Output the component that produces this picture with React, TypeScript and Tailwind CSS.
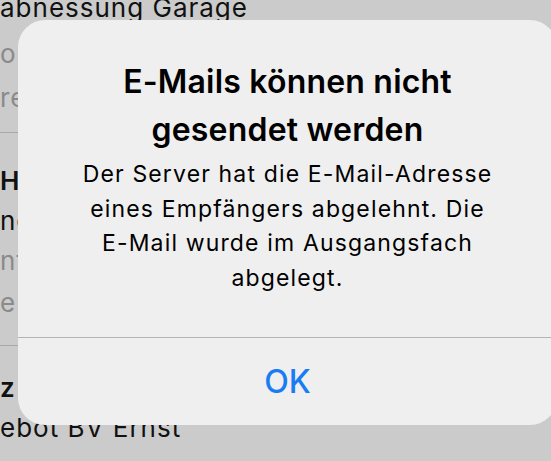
const font = "font-['Inter','Liberation_Sans',sans-serif]"

type RowProps = { text: string; tone: string; h: string }

const rows: RowProps[] = [
  { text: 'abnessung Garage', tone: 'text-[#111]', h: 'h-[46px]' },
  { text: 'o Vorgang erledigt', tone: 'text-[#8a8a8a]', h: 'h-[44px]' },
  { text: 're Angebote', tone: 'text-[#8a8a8a]', h: 'h-[40px]' },
]

const rows2: RowProps[] = [
  { text: 'Hausanschluss', tone: 'text-[#111] font-semibold', h: 'h-[40px]' },
  { text: 'nchen Kabel', tone: 'text-[#111]', h: 'h-[40px]' },
  { text: 'ntern Planung', tone: 'text-[#8a8a8a]', h: 'h-[42px]' },
  { text: 'e Angebot', tone: 'text-[#8a8a8a]', h: 'h-[40px]' },
]

const rows3: RowProps[] = [
  { text: 'z Anschluss', tone: 'text-[#111] font-semibold', h: 'h-[40px]' },
  { text: 'ebot BV Ernst', tone: 'text-[#111]', h: 'h-[40px]' },
]

const Row = ({ text, tone, h }: RowProps) => (
  <div className={`${h} text-[26px] tracking-[1px] leading-[40px] whitespace-nowrap ${tone}`}>
    {text}
  </div>
)

export default function App() {
  return (
    <div className={`relative w-[551px] h-[461px] overflow-hidden bg-[#cbcbcb] ${font}`}>
      {/* list behind the alert */}
      <div className="flex flex-col -mt-[12px]">
        {rows.map((r) => (
          <Row key={r.text} {...r} />
        ))}
        <div className="mt-[14px] h-px bg-[#a9a9a9]" />
        <div className="mt-[28px]">
          {rows2.map((r) => (
            <Row key={r.text} {...r} />
          ))}
        </div>
        <div className="mt-[22px] h-px bg-[#a9a9a9]" />
        <div className="mt-[22px]">
          {rows3.map((r) => (
            <Row key={r.text} {...r} />
          ))}
        </div>
      </div>

      {/* alert */}
      <div className="absolute left-[18px] top-[20px] w-[539px] h-[405px] rounded-[27px] bg-[#efefef] flex flex-col">
        <div className="h-[317px] flex flex-col items-center pt-[38px] text-center text-black">
          <h1 className="text-[32px] font-semibold leading-[48px] tracking-[0.2px]">
            E-Mails können nicht
            <br />
            gesendet werden
          </h1>
          <p className="text-[23px] leading-[34.5px] tracking-[1.15px] mt-[3px]">
            Der Server hat die E-Mail-Adresse
            <br />
            eines Empfängers abgelehnt. Die
            <br />
            E-Mail wurde im Ausgangsfach
            <br />
            abgelegt.
          </p>
        </div>
        <div className="h-px bg-[#b4b4b4]" />
        <button className="flex-1 flex items-center justify-center text-[32px] font-medium text-[#1a7cf5]">
          OK
        </button>
      </div>
    </div>
  )
}
